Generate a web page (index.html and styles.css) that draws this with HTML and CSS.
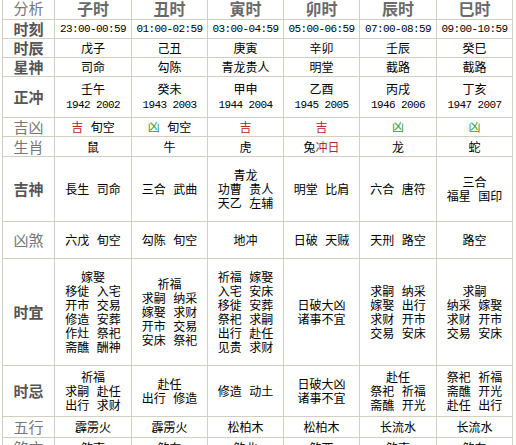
FILE: index.html
```html
<!DOCTYPE html>
<html lang="zh-CN">
<head>
<meta charset="utf-8">
<title>时辰分析</title>
<link rel="stylesheet" href="styles.css">
</head>
<body>
<table class="grid">
  <colgroup>
    <col class="c-label"><col class="c-a"><col class="c-b"><col class="c-b"><col class="c-b"><col class="c-a"><col class="c-b">
  </colgroup>
  <tr class="r-head">
    <th class="lab light">分析</th>
    <th class="hd">子时</th><th class="hd">丑时</th><th class="hd">寅时</th><th class="hd">卯时</th><th class="hd">辰时</th><th class="hd">巳时</th>
  </tr>
  <tr class="r-19">
    <th class="lab">时刻</th>
    <td class="num">23:00-00:59</td><td class="num">01:00-02:59</td><td class="num">03:00-04:59</td><td class="num">05:00-06:59</td><td class="num">07:00-08:59</td><td class="num">09:00-10:59</td>
  </tr>
  <tr class="r-19">
    <th class="lab">时辰</th>
    <td>戊子</td><td>己丑</td><td>庚寅</td><td>辛卯</td><td>壬辰</td><td>癸巳</td>
  </tr>
  <tr class="r-19">
    <th class="lab">星神</th>
    <td>司命</td><td>勾陈</td><td>青龙贵人</td><td>明堂</td><td>截路</td><td>截路</td>
  </tr>
  <tr class="r-41">
    <th class="lab">正冲</th>
    <td>壬午<br><span class="num">1942 2002</span></td>
    <td>癸未<br><span class="num">1943 2003</span></td>
    <td>甲申<br><span class="num">1944 2004</span></td>
    <td>乙酉<br><span class="num">1945 2005</span></td>
    <td>丙戌<br><span class="num">1946 2006</span></td>
    <td>丁亥<br><span class="num">1947 2007</span></td>
  </tr>
  <tr class="r-19">
    <th class="lab light">吉凶</th>
    <td><span class="ji">吉</span> 旬空</td>
    <td><span class="xiong">凶</span> 旬空</td>
    <td><span class="ji">吉</span></td>
    <td><span class="ji">吉</span></td>
    <td><span class="xiong">凶</span></td>
    <td><span class="xiong">凶</span></td>
  </tr>
  <tr class="r-20">
    <th class="lab light">生肖</th>
    <td>鼠</td><td>牛</td><td>虎</td><td>兔<span class="ji">冲日</span></td><td>龙</td><td>蛇</td>
  </tr>
  <tr class="r-65">
    <th class="lab">吉神</th>
    <td>長生 司命</td>
    <td>三合 武曲</td>
    <td>青龙<br>功曹 贵人<br>天乙 左辅</td>
    <td>明堂 比肩</td>
    <td>六合 唐符</td>
    <td>三合<br>福星 国印</td>
  </tr>
  <tr class="r-37">
    <th class="lab light">凶煞</th>
    <td>六戊 旬空</td>
    <td>勾陈 旬空</td>
    <td>地冲</td>
    <td>日破 天贼</td>
    <td>天刑 路空</td>
    <td>路空</td>
  </tr>
  <tr class="r-107">
    <th class="lab">时宜</th>
    <td>嫁娶<br>移徙 入宅<br>开市 交易<br>修造 安葬<br>作灶 祭祀<br>斋醮 酬神</td>
    <td>祈福<br>求嗣 纳采<br>嫁娶 求财<br>开市 交易<br>安床 祭祀</td>
    <td>祈福 嫁娶<br>入宅 安床<br>移徙 安葬<br>祭祀 求嗣<br>出行 赴任<br>见贵 求财</td>
    <td>日破大凶<br>诸事不宜</td>
    <td>求嗣 纳采<br>嫁娶 出行<br>求财 开市<br>交易 安床</td>
    <td>求嗣<br>纳采 嫁娶<br>求财 开市<br>交易 安床</td>
  </tr>
  <tr class="r-51">
    <th class="lab">时忌</th>
    <td>祈福<br>求嗣 赴任<br>出行 求财</td>
    <td>赴任<br>出行 修造</td>
    <td>修造 动土</td>
    <td>日破大凶<br>诸事不宜</td>
    <td>赴任<br>祭祀 祈福<br>斋醮 开光</td>
    <td>祭祀 祈福<br>斋醮 开光<br>赴任 出行</td>
  </tr>
  <tr class="r-21">
    <th class="lab light">五行</th>
    <td>霹雳火</td><td>霹雳火</td><td>松柏木</td><td>松柏木</td><td>长流水</td><td>长流水</td>
  </tr>
  <tr class="r-21">
    <th class="lab light">煞方</th>
    <td>煞南</td><td>煞东</td><td>煞北</td><td>煞西</td><td>煞南</td><td>煞东</td>
  </tr>
</table>
</body>
</html>
```
FILE: styles.css
```css
html, body {
  margin: 0;
  padding: 0;
  background: #ffffff;
}

body {
  font-family: "Noto Sans CJK SC", "Noto Sans", sans-serif;
  font-size: 12px;
  color: #000;
}

.grid {
  border-collapse: collapse;
  table-layout: fixed;
  width: 511px;
  margin: -5px 0 0 2px;
}

.c-label { width: 52px; }
.c-a { width: 77px; }
.c-b { width: 76px; }

.grid th,
.grid td {
  border: 1px solid #d2cfc0;
  padding: 0;
  text-align: center;
  vertical-align: middle;
  line-height: 14px;
  word-spacing: 5px;
  white-space: nowrap;
  overflow: hidden;
}

.lab {
  font-size: 15px;
  font-weight: bold;
  color: #555;
  line-height: 16px;
  word-spacing: 0;
}

.lab.light {
  font-weight: normal;
  color: #777;
}

.hd {
  font-size: 16px;
  font-weight: bold;
  color: #6a6a6a;
  line-height: 17px;
}

.num {
  font-family: "Liberation Mono", "DejaVu Sans Mono", monospace;
  font-size: 11px;
  letter-spacing: -0.6px;
  word-spacing: 0;
}

.ji { color: #b3262b; }
.xiong { color: #3a9a3a; }

.r-head th { height: 23px; }
.r-19 > * { height: 18px; }
.r-20 > * { height: 19px; }
.r-21 > * { height: 20px; }
.r-37 > * { height: 36px; }
.r-41 > * { height: 40px; }
.r-51 > * { height: 50px; }
.r-65 > * { height: 64px; }
.r-107 > * { height: 106px; }
```
